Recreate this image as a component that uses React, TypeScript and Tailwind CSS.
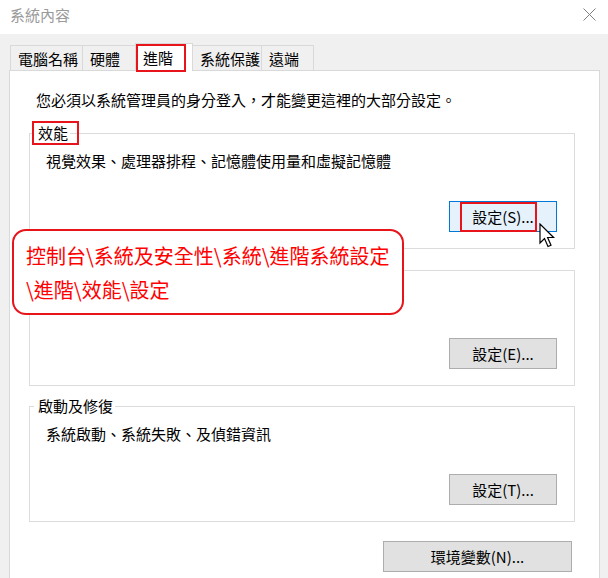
import React from 'react'

const tabs = [
  { name: '電腦名稱', w: 'w-[73px]' },
  { name: '硬體', w: 'w-[54px]' },
  { name: '進階', w: 'w-[58px]', active: true },
  { name: '系統保護', w: 'w-[70px]' },
  { name: '遠端', w: 'w-[53px]' },
]

const Button: React.FC<{ label: string; className?: string; focused?: boolean; marked?: boolean }> = ({
  label,
  className = '',
  focused,
  marked,
}) => (
  <button
    className={`relative h-[31px] flex items-center justify-center text-[15px] leading-[20px] text-black border ${
      focused ? 'bg-[#e5f1fb] border-[#0078d7]' : 'bg-[#e1e1e1] border-[#adadad]'
    } ${className}`}
  >
    {marked && <span className="absolute left-[10px] top-0 w-[77px] h-[30px] border-2 border-[#e8141b]" />}
    <span className="relative">{label}</span>
  </button>
)

const Group: React.FC<{
  title?: string
  desc?: string
  button: string
  className?: string
  marked?: boolean
  focused?: boolean
}> = ({ title, desc, button, className = '', marked, focused }) => (
  <fieldset className={`ml-[19px] w-[546px] border border-[#dcdcdc] pb-[16px] ${className}`}>
    <legend className="relative ml-[4px] pl-[4px] pr-[2px] h-[20px] text-[15px] leading-[20px] text-black">
      {marked && <span className="absolute -left-[2px] -right-[9px] -top-[2px] -bottom-[2px] border-2 border-[#e8141b]" />}
      {title}
    </legend>
    <p className="mt-[8px] h-[20px] pl-[16px] text-[15px] leading-[20px] text-black">{desc}</p>
    <div className="mt-[30px] flex justify-end pr-[17px]">
      <Button label={button} className="w-[108px]" focused={focused} marked={marked} />
    </div>
  </fieldset>
)

export default function App() {
  return (
    <div className="relative w-[608px] h-[578px] overflow-hidden bg-[#f0f0f0] font-['Noto_Sans_CJK_TC','Noto_Sans_CJK_SC',sans-serif]">
      {/* Title bar */}
      <div className="h-[34px] bg-white flex items-start justify-between pl-[10px] pr-[12px] pt-[5px]">
        <span className="text-[15px] leading-[20px] text-[#9a9a9a]">系統內容</span>
        <svg width="13" height="13" viewBox="0 0 13 13" className="mt-[3px]">
          <path d="M0.5 0.5 L12.5 12.5 M12.5 0.5 L0.5 12.5" stroke="#808080" strokeWidth="1" fill="none" />
        </svg>
      </div>

      {/* Tabs */}
      <div className="h-[36px] pl-[10px] flex items-end">
        {tabs.map((t) =>
          t.active ? (
            <div
              key={t.name}
              className={`relative z-10 -mb-px -ml-px h-[28px] ${t.w} bg-white border border-b-0 border-[#d9d9d9] flex items-center pl-[7px] text-[15px] leading-[20px] text-black`}
            >
              <span className="absolute left-0 top-0 w-[50px] h-[28px] border-2 border-[#e8141b]" />
              {t.name}
            </div>
          ) : (
            <div
              key={t.name}
              className={`-ml-px first:ml-0 h-[25px] ${t.w} border border-b-0 border-[#d9d9d9] flex items-center pl-[7px] pt-[2px] text-[15px] leading-[20px] text-black`}
            >
              {t.name}
            </div>
          )
        )}
      </div>

      {/* Panel */}
      <div className="ml-[9px] w-[591px] h-[540px] bg-white border border-[#d9d9d9] pt-[19px]">
        <p className="pl-[26px] text-[15px] leading-[20px] text-black">
          您必須以系統管理員的身分登入，才能變更這裡的大部分設定。
        </p>
        <Group
          className="mt-[13px]"
          title="效能"
          desc="視覺效果、處理器排程、記憶體使用量和虛擬記憶體"
          button="設定(S)..."
          marked
          focused
        />
        {/* label and description of this group sit under the callout */}
        <Group className="mt-[11px]" button="設定(E)..." />
        <Group
          className="mt-[10px]"
          title="啟動及修復"
          desc="系統啟動、系統失敗、及偵錯資訊"
          button="設定(T)..."
        />
        <div className="mt-[19px] pl-[373px]">
          <Button label="環境變數(N)..." className="w-[189px]" />
        </div>
      </div>

      {/* Callout */}
      <div className="absolute left-[12px] top-[229px] w-[392px] h-[86px] rounded-[14px] border-2 border-[#e8141b] bg-white pl-[12px] pt-[8px] text-[20px] leading-[34px] text-[#ff0000]">
        控制台\系統及安全性\系統\進階系統設定
        <br />
        \進階\效能\設定
      </div>

      {/* Mouse cursor */}
      <svg className="absolute left-[539px] top-[223px]" width="18" height="26" viewBox="0 0 18 26">
        <path
          d="M1 1 L1 20 L5.5 15.5 L9 23.5 L12 22.2 L8.6 14.5 L14.6 14.5 Z"
          fill="#ffffff"
          stroke="#000000"
          strokeWidth="1.2"
          strokeLinejoin="miter"
        />
      </svg>
    </div>
  )
}
